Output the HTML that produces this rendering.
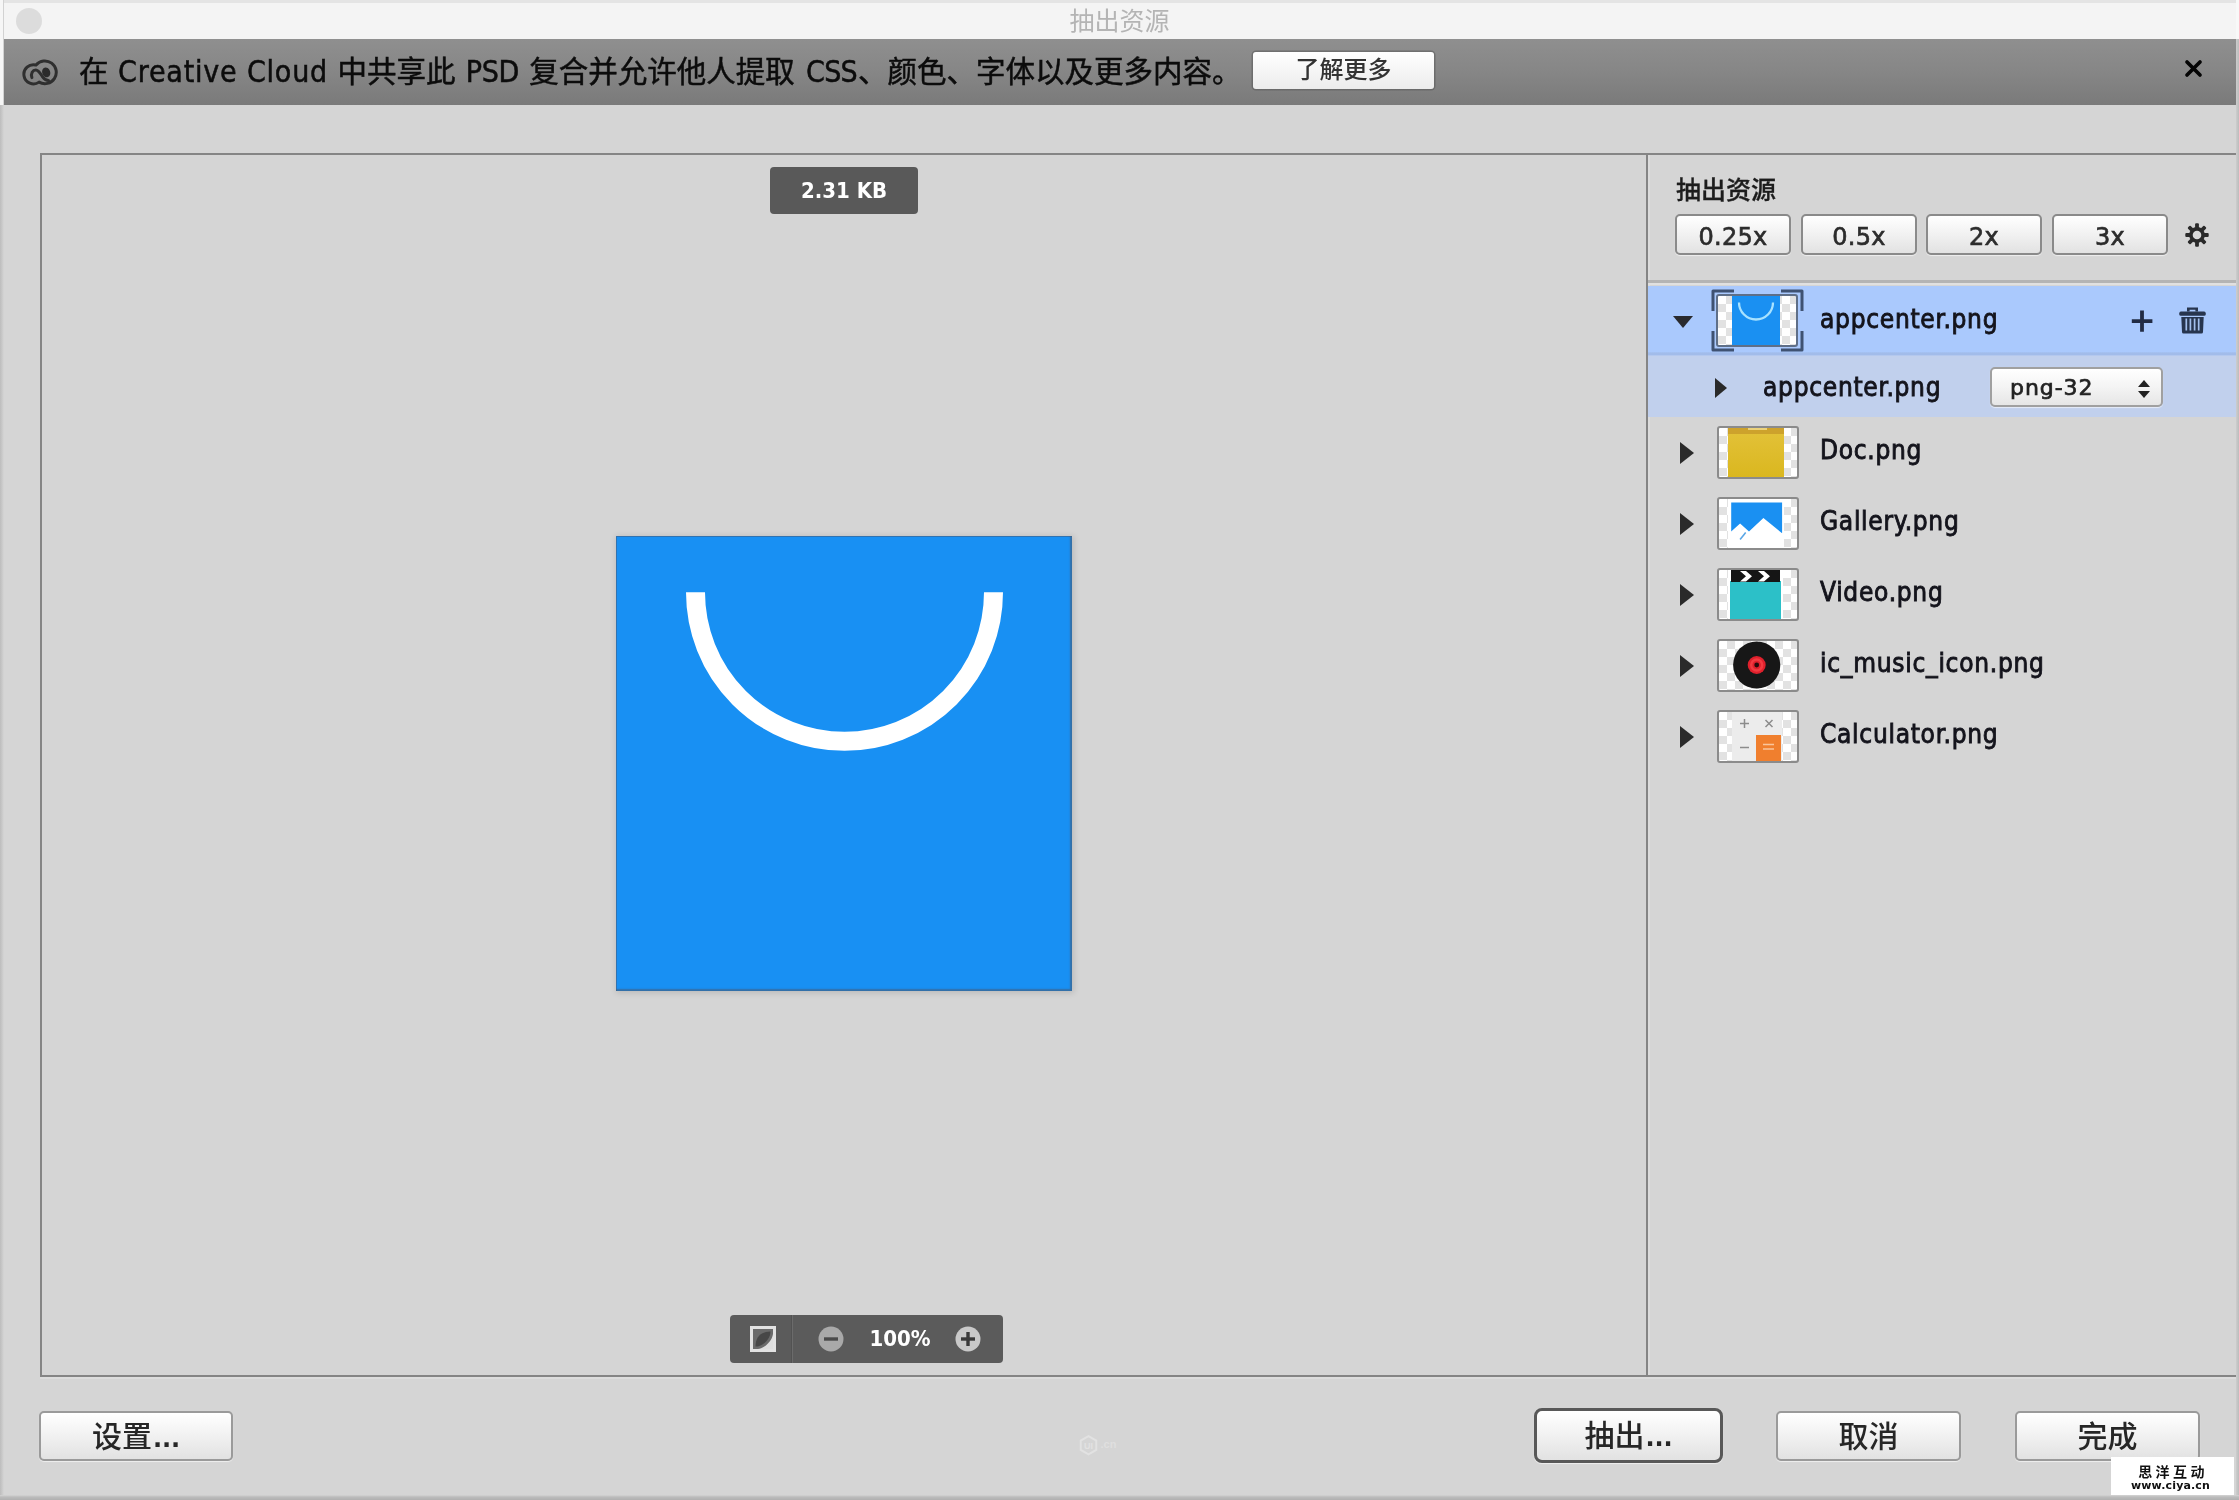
<!DOCTYPE html>
<html lang="zh-CN">
<head>
<meta charset="utf-8">
<title>抽出资源</title>
<style>
*{box-sizing:border-box;margin:0;padding:0}
html,body{width:2239px;height:1500px;overflow:hidden;background:#d5d5d5}
body{position:relative;font-family:"Liberation Sans","Noto Sans CJK SC",sans-serif;color:#111}
.abs{position:absolute}
.lat{font-family:"DejaVu Sans Condensed","DejaVu Sans","Liberation Sans","Noto Sans CJK SC",sans-serif}
#titlebar{left:0;top:0;width:2239px;height:39px;background:#f4f4f4;border-top:3px solid #e4e4e4}
#titletext{left:0;top:3px;width:2239px;height:36px;line-height:36px;text-align:center;font-size:25px;color:#b4b4b4;letter-spacing:0}
#light{left:16px;top:8px;width:26px;height:26px;border-radius:50%;background:#dcdcdc}
#edgeL{left:0;top:0;width:4px;height:1500px;background:linear-gradient(to right,#bdbdbd,#c6c6c6 40%,#d5d5d5)}
#edgeLT{left:0;top:0;width:3px;height:105px;background:#f6f6f6}
#edgeR{left:2236px;top:39px;width:3px;height:1461px;background:linear-gradient(to right,#cdcdcd,#bcbcbc)}
#edgeRT{left:2236px;top:0;width:3px;height:39px;background:#f8f8f8}
#edgeB{left:0;top:1495px;width:2239px;height:5px;background:linear-gradient(#d5d5d5,#bcbcbc 40%,#b0b0b0)}
#ccbar{left:3px;top:39px;width:2233px;height:66px;background:linear-gradient(#8f8f8f,#868686 50%,#7a7a7a);}
#cctext{-webkit-text-stroke:.5px #0c0c0c;left:79px;top:39px;height:66px;line-height:65.6px;font-size:29.5px;color:#0c0c0c;white-space:nowrap}
#learn{left:1253px;top:52px;width:181px;height:37px;background:linear-gradient(#ffffff,#ececec);border-radius:3px;text-align:center;line-height:36px;font-size:24px;color:#333;font-weight:500;box-shadow:0 0 0 1.5px rgba(90,90,90,.55)}
#frame{left:40px;top:153px;width:2210px;height:1224px;border:2px solid #858585;background:#d5d5d5;box-shadow:0 2px 0 #dddddd}
#divider{left:1646px;top:155px;width:2px;height:1220px;background:#858585;box-shadow:2px 0 0 #dcdcdc}
#badge{left:770px;top:167px;width:148px;height:47px;background:#595959;border-radius:4px;color:#fff;font-weight:bold;font-size:22px;line-height:47px;text-align:center}
#bag{left:616px;top:536px;width:456px;height:455px;background:#1890f3;box-shadow:inset -2px -2px 1.5px rgba(70,90,120,.62),inset 1px 1px 0.5px rgba(70,90,120,.55),1px 1px 6px 1px rgba(0,0,0,.13)}
#zoombar{left:730px;top:1315px;width:273px;height:48px;background:#5b5b5b;border-radius:4px}
.btn{position:absolute;background:linear-gradient(#ffffff,#f1f1f1 50%,#e2e2e2);border:2px solid #9a9a9a;border-radius:5px;text-align:center;color:#1a1a1a;box-shadow:0 1px 1px rgba(255,255,255,.6)}
.big{font-size:30px;line-height:48px;height:50px;font-weight:500;color:#262626}
.sm{font-family:"DejaVu Sans","Liberation Sans",sans-serif;font-size:24px;letter-spacing:.3px;line-height:43px;height:41px;top:214px;width:116px;color:#2c2c2c;-webkit-text-stroke:.65px #2c2c2c;border-color:#8a8a8a}
#ptitle{left:1676px;top:171.7px;font-size:25px;line-height:36px;color:#1c1c1c;font-weight:500;-webkit-text-stroke:.3px #1c1c1c}
#hline{left:1648px;top:280px;width:600px;height:3px;background:#b4b4b4;box-shadow:0 2px 0 #e0e0e0}
#selrow{left:1648px;top:286px;width:600px;height:69.5px;background:linear-gradient(#aac9fd 0,#aac9fd 65.5px,#a2bcea 67px,#a2bcea 68.5px,#b4c8ee 69.5px)}
#subrow{left:1648px;top:355.5px;width:600px;height:61px;background:#c1d0ed}
.rowtxt{position:absolute;left:1820px;font-size:26px;letter-spacing:.72px;line-height:40px;color:#14141c;-webkit-text-stroke:.85px #14141c;white-space:nowrap}
.tri{position:absolute;width:0;height:0;border-left:14px solid #2a2a2a;border-top:11px solid transparent;border-bottom:11px solid transparent}
.thumb{position:absolute;left:1717px;width:82px;height:53px;border:2px solid #8b8b8b;border-radius:3px;overflow:hidden;
 background-color:#fff;
 background-image:linear-gradient(45deg,#e2e2e2 25%,transparent 25%,transparent 75%,#e2e2e2 75%),linear-gradient(45deg,#e2e2e2 25%,transparent 25%,transparent 75%,#e2e2e2 75%);
 background-size:16px 16px;background-position:0 0,8px 8px}
#wm{left:2111px;top:1457px;width:123px;height:38px;background:#fff;text-align:center;color:#111}
#cctext .lat{font-size:30px;display:inline-block;text-align:center;line-height:65.6px;vertical-align:baseline}
#titletext,#cctext,#learn,#badge,.btn,#ptitle,.rowtxt,#wm,#zoombar div{will-change:transform}
.dots{font-family:"DejaVu Sans","Liberation Sans",sans-serif;font-weight:bold;font-size:24px;letter-spacing:-.2px;margin-left:1px}
</style>
</head>
<body>
<div class="abs" id="titlebar"></div>
<div class="abs" id="titletext">抽出资源</div>
<div class="abs" id="light"></div>
<div class="abs" id="ccbar"></div>
<svg class="abs" style="left:22px;top:58.6px" width="36" height="27" viewBox="0 0 36 27">
 <g fill="none" stroke="#2f2f2f" stroke-width="3" stroke-linecap="round" stroke-linejoin="round">
  <path d="M14.06 6.05 A11.4 11.4 0 1 1 17.06 23.12 A9.6 9.6 0 1 1 14.06 6.05Z"/>
  <path d="M9.9 18.6 C8.4 14.2 10.8 11 13.8 11 C16.6 11 18.4 14.6 20.8 18.2 C22.4 20.4 24.2 21.6 26.5 21.6"/>
 </g>
 <ellipse cx="24.2" cy="13.4" rx="4" ry="5" fill="#2b2b2b" transform="rotate(-20 24.2 13.4)"/>
</svg>
<div class="abs" id="cctext">在<span class="lat" style="width:229px;letter-spacing:.8px">Creative Cloud</span>中共享此<span class="lat" style="width:73.8px;letter-spacing:-.3px">PSD</span>复合并允许他人提取<span class="lat" style="width:63.2px;letter-spacing:-.7px;text-align:right;padding-right:1px">CSS</span>、颜色、字体以及更多内容。</div>
<div class="abs" id="learn">了解更多</div>
<svg class="abs" style="left:2184px;top:59px" width="20" height="20" viewBox="0 0 20 20"><path d="M3 3 L16 16 M16 3 L3 16" stroke="#050505" stroke-width="3.7" stroke-linecap="round"/></svg>

<div class="abs" id="frame"></div>
<div class="abs" id="divider"></div>
<div class="abs lat" id="badge">2.31 KB</div>

<div class="abs" id="bag">
 <svg width="456" height="455" viewBox="0 0 456 455"><path d="M79.5 56.3 A149 149 0 0 0 377.5 56.3" fill="none" stroke="#fff" stroke-width="19"/></svg>
</div>

<div class="abs" id="zoombar">
 <div class="abs" style="left:61px;top:0;width:1px;height:48px;background:#525252"></div><div class="abs" style="left:62px;top:0;width:1px;height:48px;background:#6b6b6b"></div>
 <svg class="abs" style="left:20px;top:11px" width="26" height="26" viewBox="0 0 26 26"><rect x="1.5" y="1.5" width="23" height="23" fill="#6a6a6a" stroke="#e2e2e2" stroke-width="3"/><path d="M8 23 C15 22 22 15 23 8 L23 23Z" fill="#dedede"/><path d="M5.5 20.5 C5.5 11 11 5.5 20.5 5.5 C20.5 13 13 20.5 5.5 20.5Z" fill="#474747"/></svg>
 <svg class="abs" style="left:88px;top:11px" width="26" height="26" viewBox="0 0 26 26"><circle cx="13" cy="13" r="12.5" fill="#a9a9a9"/><rect x="6" y="11.3" width="14" height="3.4" fill="#4a4a4a"/></svg>
 <div class="abs lat" style="left:122px;top:0;width:96px;height:48px;line-height:47px;text-align:center;color:#fff;font-weight:bold;font-size:22px">100%</div>
 <svg class="abs" style="left:225px;top:11px" width="26" height="26" viewBox="0 0 26 26"><circle cx="13" cy="13" r="12.5" fill="#c9c9c9"/><rect x="6" y="11.3" width="14" height="3.4" fill="#3a3a3a"/><rect x="11.3" y="6" width="3.4" height="14" fill="#3a3a3a"/></svg>
</div>

<!-- right panel -->
<div class="abs" id="ptitle">抽出资源</div>
<div class="btn sm lat" style="left:1675px">0.25x</div>
<div class="btn sm lat" style="left:1801px">0.5x</div>
<div class="btn sm lat" style="left:1926px">2x</div>
<div class="btn sm lat" style="left:2052px">3x</div>
<svg class="abs" style="left:2184px;top:222.2px" width="26" height="26" viewBox="-13 -13 26 26">
 <g fill="#2a2a2a"><circle r="7.9"/>
 <rect x="-1.9" y="-11.7" width="3.8" height="23.4" rx="1"/>
 <rect x="-1.9" y="-11.7" width="3.8" height="23.4" rx="1" transform="rotate(45)"/>
 <rect x="-1.9" y="-11.7" width="3.8" height="23.4" rx="1" transform="rotate(90)"/>
 <rect x="-1.9" y="-11.7" width="3.8" height="23.4" rx="1" transform="rotate(135)"/></g>
 <circle r="4.3" fill="#dadada"/>
</svg>
<div class="abs" id="hline"></div>
<div class="abs" id="selrow"></div>
<div class="abs" id="subrow"></div>


<!-- selected row -->
<div class="abs" style="left:1672.5px;top:316px;width:0;height:0;border-top:12.5px solid #2a2a2e;border-left:10.3px solid transparent;border-right:10.3px solid transparent"></div>
<div class="thumb" id="th0" style="top:294px;left:1716px;border-color:#5f6f88">
 <div class="abs" style="left:14.4px;top:0;width:48px;height:50px;background:#1a90f2"></div>
 <svg class="abs" style="left:14.4px;top:0" width="48" height="50" viewBox="0 0 48 50"><path d="M7 6.5 A17 17 0 0 0 41 6.5" fill="none" stroke="#a8e2ff" stroke-width="2.3"/></svg>
</div>
<svg class="abs" style="left:1711px;top:289px" width="93" height="63" viewBox="0 0 93 63"><g fill="none" stroke="#3f5272" stroke-width="3" stroke-linejoin="round"><path d="M23 2 H2 V22"/><path d="M70 2 H91 V22"/><path d="M23 61 H2 V42"/><path d="M70 61 H91 V42"/></g></svg>
<div class="rowtxt lat" style="top:299px">appcenter.png</div>
<svg class="abs" style="left:2131px;top:310px" width="22" height="22" viewBox="0 0 22 22"><path d="M11 .5 V21.8 M.8 11.2 H21.4" stroke="#222c44" stroke-width="3.8"/></svg>
<svg class="abs" style="left:2178.5px;top:306.5px" width="27" height="27" viewBox="0 0 27 27"><g fill="#27354e"><path d="M8 .5 H19 V4.6 H16.4 V2.8 H10.6 V4.6 H8Z"/><rect x=".3" y="4.6" width="26.4" height="4.2" rx="1.6"/><path d="M2.3 10 H24.7 L24 25 Q24 26.6 22.4 26.6 H4.6 Q3 26.6 3 25Z"/></g><g stroke="#a3bfec" stroke-width="1.7"><path d="M7.3 11.5 V23.6 M11.4 11.5 V23.6 M15.6 11.5 V23.6 M19.7 11.5 V23.6"/></g></svg>
<!-- sub row -->
<div class="tri" style="left:1714.5px;top:378px;border-left-width:12.5px;border-top-width:10px;border-bottom-width:10px"></div>
<div class="rowtxt lat" style="left:1763px;top:366.7px">appcenter.png</div>
<div class="btn lat" style="left:1990px;top:367px;width:173px;height:40px;border:2px solid #a0a0a0;border-radius:5px;font-family:'DejaVu Sans','Liberation Sans',sans-serif;text-align:left;padding-left:18px;font-size:22px;letter-spacing:.95px;line-height:37px;color:#222;-webkit-text-stroke:.7px #222;background:linear-gradient(#fff,#f4f4f4 50%,#e6e6e6)">png-32</div>
<div class="abs" style="left:2138px;top:380px;width:0;height:0;border-bottom:7.5px solid #222;border-left:6px solid transparent;border-right:6px solid transparent"></div>
<div class="abs" style="left:2138px;top:390.5px;width:0;height:0;border-top:7px solid #222;border-left:6px solid transparent;border-right:6px solid transparent"></div>
<div class="tri" style="left:1680px;top:442.0px"></div>
<div class="thumb" style="top:426px"><div class="abs" style="left:9px;top:0;width:56px;height:49px;background:linear-gradient(#e3c23a,#dab71f)"></div><div class="abs" style="left:9px;top:0;width:56px;height:6px;background:#cda22c"></div><div class="abs" style="left:29px;top:0;width:19px;height:2px;background:#ecd27a"></div></div>
<div class="rowtxt lat" style="top:429.9px">Doc.png</div>
<div class="tri" style="left:1680px;top:513.0px"></div>
<div class="thumb" style="top:497px"><div class="abs" style="left:9px;top:0;width:56px;height:49px;background:#fff"></div><svg class="abs" style="left:0;top:0" width="78" height="49" viewBox="0 0 78 49"><path d="M12.2 3.6 H63.1 V34.3 L44.4 18.9 L30 32.5 L21.1 24.5 L12.2 32.5Z" fill="#1a90f2"/><path d="M26.7 33.4 L21.1 40.4" stroke="#5aa6e6" stroke-width="1.6"/></svg></div>
<div class="rowtxt lat" style="top:500.9px">Gallery.png</div>
<div class="tri" style="left:1680px;top:584.0px"></div>
<div class="thumb" style="top:568px"><div class="abs" style="left:9px;top:0;width:55px;height:49px;background:#fff"></div><div class="abs" style="left:10.5px;top:11px;width:51px;height:38px;background:#2cc0c8"></div><svg class="abs" style="left:12px;top:0" width="49" height="12" viewBox="0 0 49 12"><rect width="49" height="12" fill="#151515"/><g fill="#fff"><path d="M9 1 H15 L21 6.3 L15 11.5 H9 L15 6.3Z"/><path d="M27 1 H33 L39 6.3 L33 11.5 H27 L33 6.3Z"/></g></svg></div>
<div class="rowtxt lat" style="top:571.9px">Video.png</div>
<div class="tri" style="left:1680px;top:655.0px"></div>
<div class="thumb" style="top:639px"><svg class="abs" style="left:0;top:0" width="78" height="49" viewBox="0 0 78 49"><circle cx="37.7" cy="24" r="23.6" fill="#171717"/><circle cx="37.7" cy="24" r="9" fill="#e0202c"/><circle cx="37.7" cy="24" r="5.5" fill="none" stroke="#f23a40" stroke-width="2.4"/><circle cx="37.7" cy="24" r="2.4" fill="#2a0a0c"/></svg></div>
<div class="rowtxt lat" style="top:642.9px">ic_music_icon.png</div>
<div class="tri" style="left:1680px;top:726.0px"></div>
<div class="thumb" style="top:710px"><div class="abs" style="left:13px;top:0;width:50px;height:49px;background:#ececec"></div><div class="abs" style="left:37px;top:23px;width:25px;height:26px;background:#f07f2e"></div><svg class="abs" style="left:0;top:0" width="78" height="49" viewBox="0 0 78 49"><g stroke="#8c8c8c" stroke-width="1.5" fill="none"><path d="M21 11.5 H30 M25.5 7 V16"/><path d="M46.5 8 L53.5 15 M53.5 8 L46.5 15"/><path d="M21 35.5 H30"/></g><g stroke="#f9c59c" stroke-width="1.6"><path d="M44 32.5 H55 M44 37 H55"/></g></svg></div>
<div class="rowtxt lat" style="top:713.9px">Calculator.png</div>

<svg class="abs" style="left:1078px;top:1434px" width="46" height="23" viewBox="0 0 46 23"><path d="M10.5 2.2 L18.3 6.7 V15.8 L10.5 20.3 L2.7 15.8 V6.7Z" fill="none" stroke="#e2e2e2" stroke-width="2"/><text x="10.5" y="14.6" font-family="Liberation Sans,sans-serif" font-size="9" font-weight="bold" text-anchor="middle" fill="#e2e2e2">UI</text><text x="22.5" y="14" font-family="Liberation Sans,sans-serif" font-size="11" font-weight="bold" fill="#dfdfdf">.cn</text></svg>
<!-- bottom buttons -->
<div class="btn big" style="left:39px;top:1411px;width:194px">设置<span class="dots">...</span></div>
<div class="btn big" style="left:1534px;top:1408px;width:189px;height:55px;border:3.5px solid #585858;border-radius:8px;line-height:50px">抽出<span class="dots">...</span></div>
<div class="btn big" style="left:1776px;top:1411px;width:185px">取消</div>
<div class="btn big" style="left:2015px;top:1411px;width:185px">完成</div>

<div class="abs" id="wm">
 <div style="font-size:14px;line-height:16px;margin-top:6.5px;letter-spacing:3.4px;font-weight:bold;padding-left:1px">思洋互动</div>
 <div style="font-family:'DejaVu Sans','Liberation Sans',sans-serif;font-size:11px;line-height:12px;font-weight:bold;letter-spacing:.15px;margin-top:0px;margin-left:-4px">www.ciya.cn</div>
</div>
<div class="abs" id="edgeL"></div><div class="abs" id="edgeLT"></div><div class="abs" id="edgeRT"></div>
<div class="abs" id="edgeR"></div>
<div class="abs" id="edgeB"></div>
</body>
</html>
